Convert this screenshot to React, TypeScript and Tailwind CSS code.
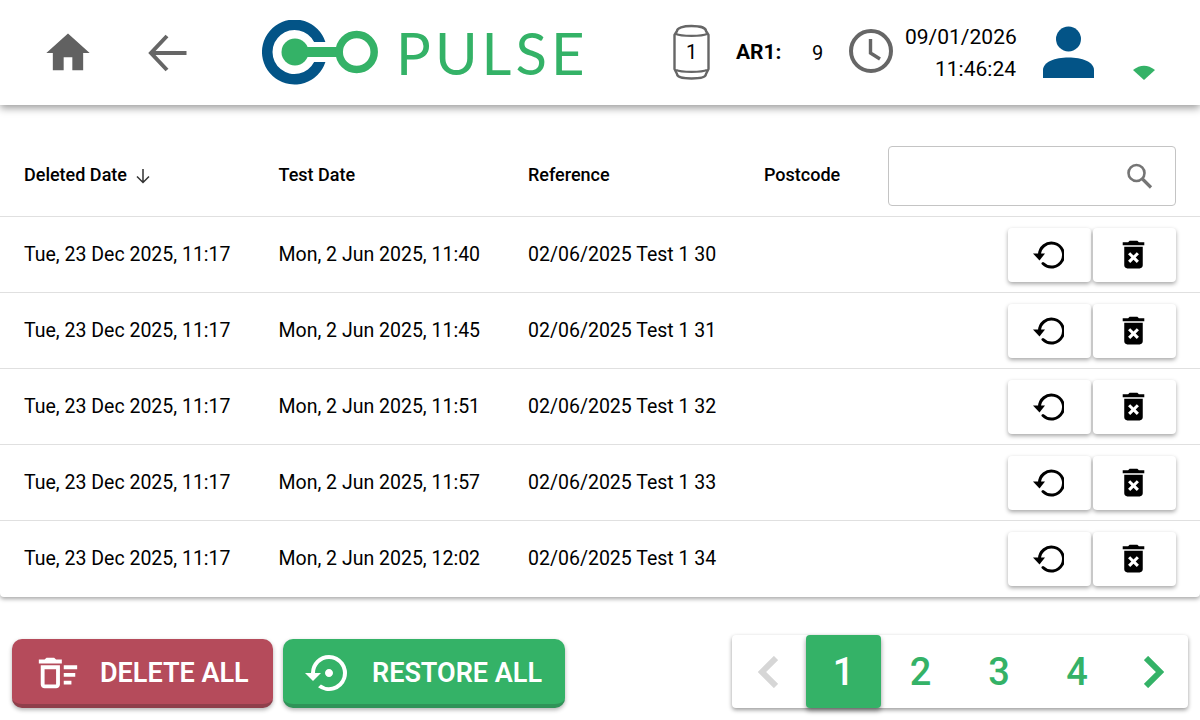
import React from "react";
import { MdHome, MdDeleteForever, MdOutlineDeleteSweep, MdSettingsBackupRestore } from "react-icons/md";

const rows = [
  ["Mon, 2 Jun 2025, 11:40", "02/06/2025 Test 1 30"],
  ["Mon, 2 Jun 2025, 11:45", "02/06/2025 Test 1 31"],
  ["Mon, 2 Jun 2025, 11:51", "02/06/2025 Test 1 32"],
  ["Mon, 2 Jun 2025, 11:57", "02/06/2025 Test 1 33"],
  ["Mon, 2 Jun 2025, 12:02", "02/06/2025 Test 1 34"],
];

function Logo() {
  return (
    <svg width="116" height="65" viewBox="262 20 116 65" className="shrink-0">
      <path d="M325.4 42A32.5 32.5 0 1 0 325.4 62L314.1 62A22 22 0 1 1 314.1 42Z" fill="#035487" />
      <circle cx="295" cy="52" r="13.5" fill="#34b267" />
      <rect x="300" y="47" width="42" height="10" fill="#34b267" />
      <circle cx="356.7" cy="52" r="17.5" fill="none" stroke="#34b267" strokeWidth="7.5" />
    </svg>
  );
}

function RestoreIcon() {
  return (
    <svg width="34" height="34" viewBox="0 0 34 34" fill="none" className="ml-[-5px] mt-[-2px]">
      <path d="M9.5 18.5A12 12 0 1 1 13 26.5" stroke="#000" strokeWidth="3" strokeLinecap="round" />
      <path d="M3 16.5H15L9.5 23.5Z" fill="#000" />
    </svg>
  );
}

function ActionButton({ children }: { children: React.ReactNode }) {
  return (
    <button className="w-[83px] h-[54px] bg-white rounded-[4px] flex items-center justify-center shadow-[0_2px_4px_rgba(0,0,0,0.35)]">
      {children}
    </button>
  );
}

export default function App() {
  return (
    <div className="w-[1200px] h-[720px] bg-white overflow-hidden flex flex-col text-black" style={{ fontFamily: "Roboto, sans-serif" }}>
      <header className="h-[105px] shrink-0 flex items-center bg-white shadow-[0_3px_8px_rgba(0,0,0,0.4)] z-10 pl-[42px]">
        <MdHome size={52} color="#616161" className="shrink-0" />
        <svg width="40" height="40" viewBox="0 0 40 40" fill="none" className="ml-[54px] shrink-0">
          <path d="M38.5 20H4M19 3L3 20L19 37" stroke="#666" strokeWidth="4" />
        </svg>
        <div className="ml-[74px]"><Logo /></div>
        <div className="ml-[18px] w-[193px] text-[58px] leading-none text-[#34b267] tracking-[0.07em] font-normal shrink-0" style={{ fontFamily: "Lato, sans-serif" }}>PULSE</div>
        <div className="relative ml-[84px] w-[37px] h-[56px] shrink-0 flex items-center justify-center text-[20px] mt-[-1px]">
          <svg width="37" height="56" viewBox="0 0 37 56" fill="none" className="absolute inset-0">
            <path d="M4 7C4 4 10 2 18.5 2S33 4 33 7L35.5 11V45L33 50C33 53 27 54.5 18.5 54.5S4 53 4 50L1.5 45V11Z" stroke="#666" strokeWidth="2.4" strokeLinejoin="round" />
            <path d="M3 10C8 12.5 29 12.5 34 10M3 46C8 48.5 29 48.5 34 46" stroke="#666" strokeWidth="2.2" />
          </svg>
          <span className="relative">1</span>
        </div>
        <div className="ml-[25px] w-[76px] font-bold text-[21px] shrink-0 pl-[1px]">AR1:</div>
        <div className="w-[38px] text-[20px] shrink-0 pl-[1px]">9</div>
        <svg width="44" height="44" viewBox="0 0 44 44" fill="none" className="shrink-0 mt-[-4px]">
          <circle cx="22" cy="22" r="20" stroke="#666" strokeWidth="4" />
          <path d="M21.5 10V24L31 30" stroke="#666" strokeWidth="3.4" />
        </svg>
        <div className="ml-[12px] w-[111px] text-right text-[21px] leading-[32px] shrink-0 mt-[1px]">
          <div>09/01/2026</div>
          <div>11:46:24</div>
        </div>
        <svg width="51" height="52" viewBox="0 0 51 52" className="ml-[27px] shrink-0 mt-[-2px]">
          <circle cx="25.5" cy="13" r="12.5" fill="#035487" />
          <path d="M0 52V44C0 36 12 31.5 25.5 31.5S51 36 51 44V52Z" fill="#035487" />
        </svg>
        <svg width="22" height="15" viewBox="0 0 22 15" className="ml-[39px] shrink-0 mt-[40px]">
          <path d="M0 5Q11 -3.5 22 5L11 15Z" fill="#34b267" />
        </svg>
      </header>

      <section className="h-[492px] shrink-0 rounded-b-[4px] shadow-[0_2px_4px_rgba(0,0,0,0.35)]">
        <div className="h-[112px] flex items-center pl-[24px] pr-[24px] pt-[30px] text-[18px] font-medium border-b border-[#e0e0e0]">
          <div className="w-[254.5px] flex items-center mt-[-2px]">
            Deleted Date
            <svg width="16" height="16" viewBox="0 0 16 16" fill="none" className="ml-[8px] mt-[3px]">
              <path d="M8 1V14M2 8.5L8 14.5L14 8.5" stroke="#333" strokeWidth="1.5" />
            </svg>
          </div>
          <div className="w-[249.5px] mt-[-2px]">Test Date</div>
          <div className="w-[236px] mt-[-2px]">Reference</div>
          <div className="w-[124px] mt-[-2px]">Postcode</div>
          <div className="relative w-[288px] h-[60px] border border-[#c4c4c4] rounded-[4px]">
            <svg width="30" height="30" viewBox="0 0 30 30" fill="none" className="absolute right-[21px] top-[14px]">
              <circle cx="12.5" cy="12" r="8" stroke="#757575" strokeWidth="2.6" />
              <path d="M18.5 18L27 26.5" stroke="#757575" strokeWidth="3.2" />
            </svg>
          </div>
        </div>
        {rows.map((r, i) => (
          <div key={i} className={`h-[76px] flex items-center pl-[24px] pr-[24px] text-[19.5px] ${i < 4 ? "border-b border-[#e0e0e0]" : ""}`}>
            <div className="w-[254.5px]">Tue, 23 Dec 2025, 11:17</div>
            <div className="w-[249.5px]">{r[0]}</div>
            <div className="w-[236px]">{r[1]}</div>
            <div className="ml-auto flex gap-[2px]">
              <ActionButton><RestoreIcon /></ActionButton>
              <ActionButton><MdDeleteForever size={37} color="#000" className="mt-[-1px] ml-[-2px]" /></ActionButton>
            </div>
          </div>
        ))}
      </section>

      <footer className="flex-1 flex items-start pt-[38px] pl-[12px]">
        <button className="mt-[4px] w-[261px] h-[69px] rounded-[10px] bg-[#b54b5b] border-b-4 border-[#8f3f4b] shadow-[0_2px_4px_rgba(0,0,0,0.3)] flex items-center pl-[26px] pt-[3px] text-white text-[27px] font-semibold">
          <MdOutlineDeleteSweep size={46} className="shrink-0 ml-[-3px] mr-[19px]" />
          DELETE ALL
        </button>
        <button className="mt-[4px] ml-[10px] w-[282px] h-[69px] rounded-[10px] bg-[#34b267] border-b-4 border-[#2f9358] shadow-[0_2px_4px_rgba(0,0,0,0.3)] flex items-center pl-[22px] pt-[3px] text-white text-[27px] font-semibold">
          <MdSettingsBackupRestore size={48} className="shrink-0 mr-[19px]" />
          RESTORE ALL
        </button>
        <nav className="ml-[167px] w-[456px] h-[73px] bg-white rounded-[4px] shadow-[0_2px_4px_rgba(0,0,0,0.4)] flex items-center text-[38px] font-medium text-[#34b267]">
          <div className="w-[74px] flex justify-center">
            <svg width="20" height="32" viewBox="0 0 20 32" fill="none" className="ml-[-2px]"><path d="M18 2L4 16L18 30" stroke="#d6d6d6" strokeWidth="6" /></svg>
          </div>
          <div className="w-[75px] h-[73px] pt-[1px] bg-[#34b267] text-white rounded-[4px] flex items-center justify-center shadow-[0_3px_5px_rgba(0,0,0,0.4)]">1</div>
          <div className="w-[79px] pt-[1px] text-center">2</div>
          <div className="w-[78px] pt-[1px] text-center">3</div>
          <div className="w-[78px] pt-[1px] text-center">4</div>
          <div className="w-[72px] flex justify-center">
            <svg width="20" height="32" viewBox="0 0 20 32" fill="none" className="ml-[4px]"><path d="M2 2L16 16L2 30" stroke="#34b267" strokeWidth="6" /></svg>
          </div>
        </nav>
      </footer>
    </div>
  );
}
